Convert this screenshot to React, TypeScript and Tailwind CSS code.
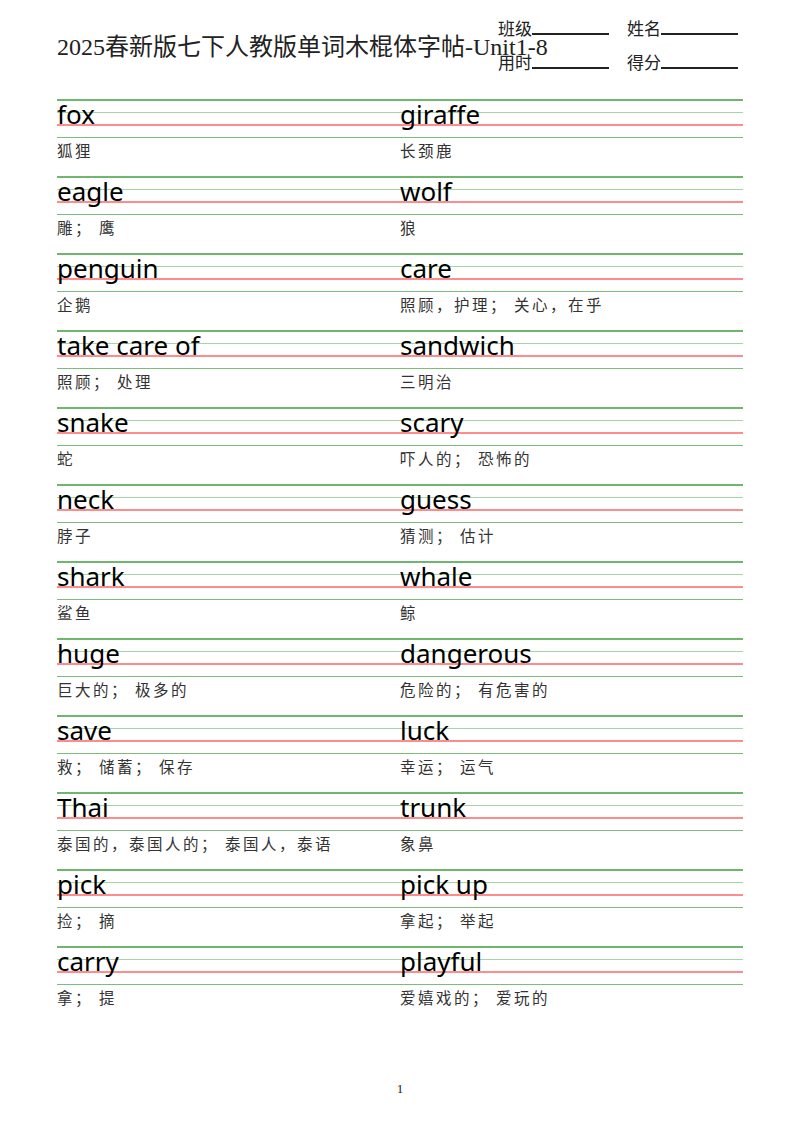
import React from 'react';

const words: [string, string][] = [
  ['fox', '狐狸'],
  ['giraffe', '长颈鹿'],
  ['eagle', '雕；鹰'],
  ['wolf', '狼'],
  ['penguin', '企鹅'],
  ['care', '照顾，护理；关心，在乎'],
  ['take care of', '照顾；处理'],
  ['sandwich', '三明治'],
  ['snake', '蛇'],
  ['scary', '吓人的；恐怖的'],
  ['neck', '脖子'],
  ['guess', '猜测；估计'],
  ['shark', '鲨鱼'],
  ['whale', '鲸'],
  ['huge', '巨大的；极多的'],
  ['dangerous', '危险的；有危害的'],
  ['save', '救；储蓄；保存'],
  ['luck', '幸运；运气'],
  ['Thai', '泰国的，泰国人的；泰国人，泰语'],
  ['trunk', '象鼻'],
  ['pick', '捡；摘'],
  ['pick up', '拿起；举起'],
  ['carry', '拿；提'],
  ['playful', '爱嬉戏的；爱玩的'],
];

// pair words two per row
const rows: [string, string][][] = [];
for (let i = 0; i < words.length; i += 2) {
  rows.push([words[i], words[i + 1]]);
}

const zhFont = { fontFamily: '"Noto Sans CJK SC", "Liberation Serif", serif' };

const Meaning: React.FC<{ text: string }> = ({ text }) => (
  <span>
    {text.split('；').map((part, i, arr) => (
      <React.Fragment key={i}>
        {part}
        {i < arr.length - 1 && <span className="mr-[6px]">；</span>}
      </React.Fragment>
    ))}
  </span>
);

const Field: React.FC<{ label: string }> = ({ label }) => (
  <div className="flex items-end">
    <span className="text-[17px] leading-[18px] text-[#222]" style={zhFont}>
      {label}
    </span>
    <div className="w-[77px] h-[2px] mb-[2px] bg-[#222]" />
  </div>
);

const WordRow: React.FC<{ pair: [string, string][] }> = ({ pair }) => (
  <div className="flex flex-col h-[77px]">
    <div className="grid">
      {/* four-line writing guide */}
      <div className="col-start-1 row-start-1 flex flex-col justify-between h-[39.5px]">
        <div className="h-[1.5px] bg-[#6fb66f]" />
        <div className="h-[1.5px] bg-[#a6d4a6]" />
        <div className="h-[1.5px] bg-[#ff8c8c]" />
        <div className="h-[1.5px] bg-[#7cbd7c]" />
      </div>
      <div className="col-start-1 row-start-1 grid grid-cols-[343px_1fr] pt-[2px]">
        {pair.map(([en]) => (
          <span
            key={en}
            className="text-[26px] leading-[26px] text-black"
            style={{ fontFamily: '"Noto Sans", sans-serif' }}
          >
            {en}
          </span>
        ))}
      </div>
    </div>
    <div className="grid grid-cols-[343px_1fr] mt-[1.5px]">
      {pair.map(([en, zh]) => (
        <span
          key={en}
          className="text-[15.5px] leading-[20px] tracking-[2.5px] text-[#333]"
          style={zhFont}
        >
          <Meaning text={zh} />
        </span>
      ))}
    </div>
  </div>
);

const App: React.FC = () => {
  return (
    <div className="w-[800px] h-[1132px] bg-white px-[57px]">
      {/* Header */}
      <div className="grid pt-[19px]">
        <h1
          className="col-start-1 row-start-1 self-center mt-[4px] text-[24px] leading-[22px] font-normal text-[#222]"
          style={{ fontFamily: '"Liberation Serif", "Noto Sans CJK SC", serif' }}
        >
          2025春新版七下人教版单词木棍体字帖-Unit1-8
        </h1>
        <div className="col-start-1 row-start-1 justify-self-end mr-[5px] flex flex-col gap-[16px]">
          <div className="flex gap-[18px]">
            <Field label="班级" />
            <Field label="姓名" />
          </div>
          <div className="flex gap-[18px]">
            <Field label="用时" />
            <Field label="得分" />
          </div>
        </div>
      </div>

      {/* Word rows */}
      <div className="mt-[28px] flex flex-col">
        {rows.map((pair, i) => (
          <WordRow key={i} pair={pair} />
        ))}
      </div>

      {/* Page number */}
      <div
        className="mt-[58px] text-center text-[13px] leading-[16px] text-[#222]"
        style={{ fontFamily: '"Liberation Serif", serif' }}
      >
        1
      </div>
    </div>
  );
};

export default App;
